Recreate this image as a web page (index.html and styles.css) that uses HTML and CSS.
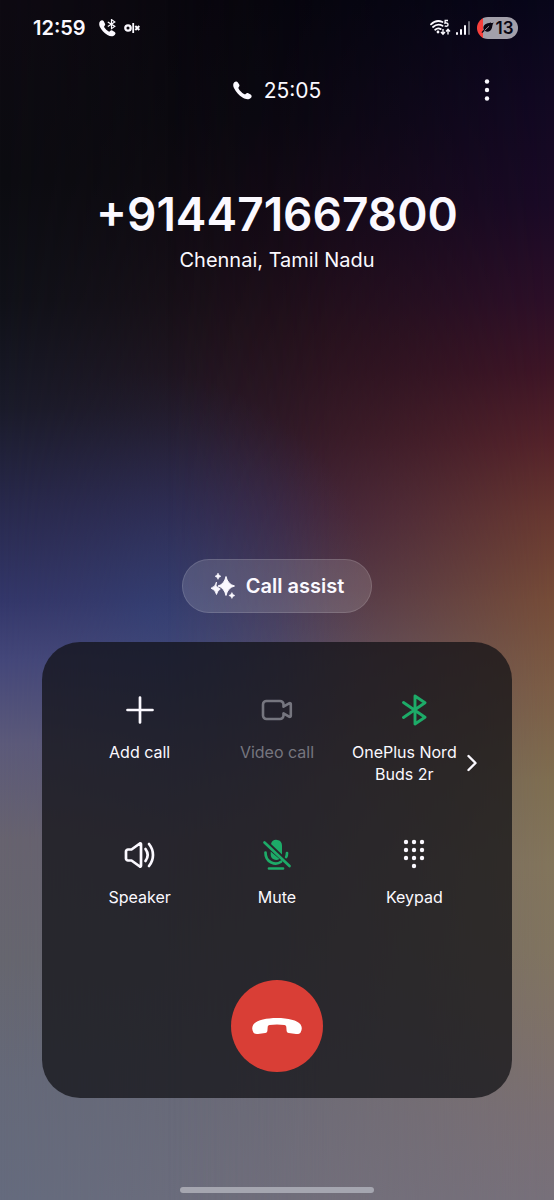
FILE: index.html
```html
<!DOCTYPE html>
<html lang="en">
<head>
<meta charset="utf-8">
<meta name="viewport" content="width=device-width, initial-scale=1">
<title>Ongoing call</title>
<link rel="stylesheet" href="styles.css">
</head>
<body>
<main class="screen">
  <header class="status">
    <div class="status-left">
      <time class="clock">12:59</time>
      <svg class="status-call" width="18" height="18" viewBox="0 0 18 18" aria-hidden="true">
        <path fill="currentColor" d="M1.3 1.9C2.5.8 4 1 4.6 2.1L6 4.7c.5 1 0 1.6-.6 2.4-.5.6-.3 1 .2 1.7 1 1.5 2.2 2.6 3.7 3.5.7.4 1.1.5 1.6-.1.8-.8 1.4-1.2 2.4-.7l2.4 1.4c1.1.7 1.1 2 0 3.1-1.7 1.8-4.4 1.6-7.2-.1C4.900 13.700 2.300 11 .8 7.700-.2 5.400 0 3.200 1.300 1.900z"/>
        <path fill="none" stroke="currentColor" stroke-width="1.200" d="M8.800 3l7 4.400-3.300 2.300V.6l3.300 2.300-7 4.600"/>
      </svg>
      <svg class="status-app" width="17" height="12" viewBox="0 0 17 12" aria-hidden="true" fill="none" stroke="currentColor">
        <circle cx="4" cy="6" r="2.700" stroke-width="2.300"/>
        <path stroke-width="1.800" d="M9.200 1v10"/>
        <path stroke-width="2" d="M11.300 4l4 4M15.300 4l-4 4"/>
      </svg>
    </div>
    <div class="status-right">
      <svg width="21" height="18" viewBox="0 0 21 18" aria-hidden="true" fill="none" stroke="currentColor">
        <path stroke-width="1.800" stroke-linecap="round" d="M1 5.300C4.400 2 9 1.400 12.500 3M3 8c3-2.700 6.400-2.900 9.500-1.200M5.200 10.700c1.800-1.500 3.800-1.600 5.500-.6"/>
        <circle cx="8" cy="13" r="1.400" fill="currentColor" stroke="none"/>
        <path stroke-width="1.400" d="M18 1.500h-2.800L15 4.200c1.600-.5 3 0 3 1.500 0 1.600-1.800 2-3.300 1.200M13 10v5M11 13l2 2.300 2-2.300M18 15.500v-5M16 12.500l2-2.300 2 2.300"/>
      </svg>
      <svg width="14" height="16" viewBox="0 0 14 16" aria-hidden="true" fill="currentColor">
        <rect x="0" y="12" width="2" height="3" rx="1"/><rect x="4" y="9" width="2" height="6" rx="1"/><rect x="8" y="5" width="2" height="10" rx="1"/><rect x="12" y="1" width="2" height="14" rx="1" opacity=".4"/>
      </svg>
      <div class="battery">
        <svg width="13" height="12" viewBox="0 0 13 12" aria-hidden="true"><path fill="#090612" d="M12.800.5c-2 .8-4 .2-6.200.8C3 2.300 1.600 5 2.800 7.500L.5 10.300l.8.8 2.500-2.300c3 2.200 6.200.2 7.100-2.800.5-1.700.5-3.800 1.900-5.500z"/><path fill="none" stroke="#a3a0aa" stroke-width=".9" d="M3.500 8.500l4.600-4.300"/></svg>
        <span>13</span>
      </div>
    </div>
  </header>

  <div class="call-bar">
    <div class="duration">
      <svg width="19" height="19" viewBox="0 0 19 19" aria-hidden="true"><path fill="currentColor" d="M1.300 1.200c1.200-1 2.800-.9 3.600.2l1.300 2.100c.5.9.3 1.600-.4 2.400-.6.700-.5 1.200-.1 1.900 1 1.900 3 4 5.300 5.200.8.400 1.300.3 1.900-.3.700-.8 1.500-1 2.400-.500l2.300 1.300c1.300.8 1.400 2.200.2 3.500-2 2-5.200 1.600-8.300-.4C6 14.300 3 11.200 1.100 7.300-.1 4.800-.2 2.600 1.300 1.200z"/></svg>
      <time>25:05</time>
    </div>
    <button class="more" type="button" aria-label="More options">
      <svg width="6" height="22" viewBox="0 0 6 22" fill="currentColor" aria-hidden="true"><circle cx="3" cy="2.500" r="2.200"/><circle cx="3" cy="11" r="2.200"/><circle cx="3" cy="19.500" r="2.200"/></svg>
    </button>
  </div>

  <section class="caller">
    <h1 class="number">+914471667800</h1>
    <p class="place">Chennai, Tamil Nadu</p>
  </section>

  <button class="assist" type="button">
    <svg width="26" height="26" viewBox="0 0 26 26" aria-hidden="true" fill="currentColor">
      <path d="M16 3.500q1.700 7.800 8.500 9.500-6.800 1.700-8.500 9.500-1.700-7.800-8-9.500 6.300-1.700 8-9.500z" stroke="currentColor" stroke-linejoin="round"/>
      <path d="M6.500 9q-.9 4.800-5.500 6.200 4.300 1.300 5.500 6.300.9-4 3.800-5.500L6 13z" stroke="currentColor" stroke-width=".8" stroke-linejoin="round"/>
      <path d="M8 0q.6 2.700 3 3.300Q8.600 3.900 8 6.400 7.400 3.900 5 3.300 7.400 2.700 8 0z" stroke="currentColor" stroke-width=".5"/>
      <path d="M21.900 19.500q.6 2.300 3 3-2.400.6-3 3-.6-2.400-3-3 2.400-.7 3-3z" stroke="currentColor" stroke-width=".5"/>
    </svg>
    <span>Call assist</span>
  </button>

  <section class="panel" aria-label="Call controls">
    <div class="controls">
      <button class="control" type="button">
        <svg width="32" height="32" viewBox="0 0 32 32" aria-hidden="true" fill="none" stroke="currentColor" stroke-width="2.700" stroke-linecap="round"><path d="M16 3.500v25M3.500 16h25"/></svg>
        <span>Add call</span>
      </button>
      <button class="control" type="button" disabled>
        <svg width="32" height="32" viewBox="0 0 32 32" aria-hidden="true" fill="none" stroke="currentColor" stroke-width="2.600" stroke-linejoin="round"><path d="M5.500 7H19a3.500 3.500 0 0 1 3.500 3.500v2.200L28.500 9.200a1 1 0 0 1 1.300 1v11.600a1 1 0 0 1-1.300 1l-6-3.500v2.200A3.500 3.500 0 0 1 19 25H5.500A3.500 3.500 0 0 1 2 21.500v-11A3.500 3.500 0 0 1 5.500 7z"/></svg>
        <span>Video call</span>
      </button>
      <button class="control" type="button" aria-pressed="true">
        <svg class="green" width="32" height="32" viewBox="0 0 32 32" aria-hidden="true" fill="none" stroke="currentColor" stroke-width="2.900" stroke-linecap="round" stroke-linejoin="round"><path d="M5.500 8.500l21.500 14.800-10 6.700V2l10 6.700L5.500 23.500"/></svg>
        <span class="device">
          <span>OnePlus Nord<br>Buds 2r</span>
          <svg width="10" height="18" viewBox="0 0 10 18" aria-hidden="true" fill="none" stroke="currentColor" stroke-width="2.400" stroke-linecap="round" stroke-linejoin="round"><path d="M1.500 2L8.500 9l-7 7"/></svg>
        </span>
      </button>
      <button class="control" type="button">
        <svg width="32" height="32" viewBox="0 0 32 32" aria-hidden="true" fill="none" stroke="currentColor" stroke-width="2.700" stroke-linecap="round" stroke-linejoin="round"><path d="M4 10.500h3.500l8.300-6a.8.8 0 0 1 1.200.7v21.600a.8.8 0 0 1-1.200.7l-8.300-6H4A2 2 0 0 1 2 19.500v-7a2 2 0 0 1 2-2zM21.500 10c2.700 3.700 2.700 8.300 0 12M25 5c5.300 6.500 5.300 15.500 0 22"/></svg>
        <span>Speaker</span>
      </button>
      <button class="control" type="button" aria-pressed="true">
        <svg class="green" width="32" height="32" viewBox="0 0 32 32" aria-hidden="true" fill="none" stroke="currentColor" stroke-width="2.700" stroke-linecap="round"><path d="M10 5A5.600 5.600 0 0 1 21 6.500v8.900zM9.700 12.500l8.800 7.500c-4 2.300-8.800 0-8.800-4.500z" fill="currentColor" stroke="none"/><path d="M4.500 13.500C4.300 24 15 26.500 20 22.700M26 14c0 1.500-.2 2.800-.8 4M8 29.500h14M3.500 3.500l25 23.500"/></svg>
        <span>Mute</span>
      </button>
      <button class="control" type="button">
        <svg width="32" height="32" viewBox="0 0 32 32" aria-hidden="true" fill="currentColor"><circle cx="8" cy="3" r="2.200"/><circle cx="16" cy="3" r="2.200"/><circle cx="24" cy="3" r="2.200"/><circle cx="8" cy="11" r="2.200"/><circle cx="16" cy="11" r="2.200"/><circle cx="24" cy="11" r="2.200"/><circle cx="8" cy="19" r="2.200"/><circle cx="16" cy="19" r="2.200"/><circle cx="24" cy="19" r="2.200"/><circle cx="16" cy="27" r="2.200"/></svg>
        <span>Keypad</span>
      </button>
    </div>
    <button class="end" type="button" aria-label="End call">
      <svg width="50" height="18" viewBox="0 0 50 18" aria-hidden="true"><path fill="currentColor" d="M25 1c11 0 20.500 2.400 23.600 6.400 1.600 2.300 1.600 5.600 0 8-1 1.400-2.700 1.700-4.600 1.500l-7.200-.9c-1.500-.3-2.100-1-2.200-2.300l-.3-3.600c-.1-1.300-.6-1.900-1.900-2.100-4.500-.7-10.300-.7-14.800 0-1.300.2-1.800.8-1.900 2.100l-.3 3.600c-.1 1.300-.7 2-2.200 2.300l-7.200.9c-1.900.2-3.600-.1-4.600-1.500-1.600-2.400-1.600-5.700 0-8C4.500 3.400 14 1 25 1z"/></svg>
    </button>
  </section>
  <div class="home-bar"></div>
</main>
</body>
</html>
```

FILE: styles.css
```css
* {
  box-sizing: border-box;
}

body {
  margin: 0;
  background: #0a080e;
  color: #fbf9ff;
  font-family: Inter, Roboto, sans-serif;
}

button {
  margin: 0;
  padding: 0;
  border: 0;
  background: none;
  color: inherit;
  font: inherit;
}

svg {
  display: block;
  flex: none;
}

/* Three vertical colour ramps blended from left to right */
.screen {
  position: relative;
  isolation: isolate;
  display: flex;
  flex-direction: column;
  align-items: center;
  min-height: 100vh;
  background:
    linear-gradient(#0e0a12 0%, #0c0c11 15%, #101118 25%, #1a1b2a 34%, #28294c 42%, #33376a 50%, #44477a 55%, #5c5a7a 62%, #67636f 70%, #66666f 80%, #656979 90%, #656b7e 100%);
}

.screen::before,
.screen::after {
  content: "";
  position: absolute;
  inset: 0;
  z-index: -1;
}

.screen::before {
  background:
    radial-gradient(ellipse 42% 20% at 26% 51%, rgba(46, 74, 132, 0.75), rgba(46, 74, 132, 0.4) 45%, transparent),
    linear-gradient(#06050b 0%, #0a080e 10%, #160b14 20%, #22121a 28%, #2c1826 36%, #38203e 43%, #44304f 49%, #534868 55%, #60566e 65%, #66626e 78%, #6a6a78 90%, #706e7b 100%);
  mask-image: linear-gradient(to right, transparent, rgba(0, 0, 0, 0.3) 20%, rgba(0, 0, 0, 0.75) 42%, #000 60%);
}

.screen::after {
  background:
    linear-gradient(#08061a 0%, #110822 8%, #1a0a26 17%, #2c0f28 25%, #3e1526 31%, #55232a 37%, #683830 43%, #764c38 50%, #7c5c44 57%, #7f6e50 65%, #83755b 72%, #81745f 79%, #7e7168 86%, #7a6f73 93%, #77707a 100%);
  mask-image: linear-gradient(to right, transparent 30%, rgba(0, 0, 0, 0.15) 50%, rgba(0, 0, 0, 0.55) 75%, #000);
}

.status {
  display: flex;
  align-items: center;
  justify-content: space-between;
  width: 100%;
  height: 56px;
  padding: 0 36px 0 33px;
}

.status-left,
.status-right {
  display: flex;
  align-items: center;
}

.clock {
  font-size: 20px;
  font-weight: 600;
}

.status-call {
  margin-left: 13px;
}

.status-app {
  margin-left: 7px;
}

.status-right {
  gap: 5px;
}

.battery {
  display: flex;
  align-items: center;
  justify-content: center;
  gap: 1px;
  width: 41px;
  height: 22px;
  margin-left: 2px;
  border-radius: 11px;
  background: linear-gradient(to right, #f8403c 6px, #a3a0aa 6px);
  color: #090612;
  font-size: 17px;
  font-weight: 600;
}

.call-bar {
  display: grid;
  grid-template-columns: 1fr auto 1fr;
  align-items: center;
  width: 100%;
  height: 68px;
  padding: 0 56px;
}

.duration {
  grid-column: 2;
  display: flex;
  align-items: center;
  gap: 12px;
  font-size: 21px;
}

.more {
  justify-self: end;
  padding: 8px;
}

.caller {
  display: flex;
  flex-direction: column;
  align-items: center;
  margin-top: 60px;
}

.number {
  margin: 0;
  font-size: 46px;
  font-weight: 600;
  line-height: 60px;
}

.place {
  margin: 0;
  font-size: 20px;
  line-height: 32px;
}

.assist {
  display: flex;
  align-items: center;
  justify-content: center;
  gap: 10px;
  width: 190px;
  height: 54px;
  margin-top: 283px;
  border: 1px solid rgba(255, 255, 255, 0.13);
  border-radius: 27px;
  background: rgba(255, 255, 255, 0.14);
  font-size: 20px;
  font-weight: 600;
}

.panel {
  display: flex;
  flex-direction: column;
  align-items: center;
  align-self: stretch;
  margin: 29px 42px 0;
  padding: 52px 29px 26px;
  border-radius: 38px;
  background: rgba(16, 17, 20, 0.73);
}

.controls {
  display: grid;
  grid-template-columns: repeat(3, 1fr);
  width: 100%;
}

.control {
  display: flex;
  flex-direction: column;
  align-items: center;
  gap: 15px;
  min-height: 145px;
  font-size: 16px;
  line-height: 22px;
}

.control:disabled {
  color: #76767f;
}

.green {
  color: #1dab68;
}

.device {
  display: flex;
  align-items: center;
  gap: 10px;
  white-space: nowrap;
}

.end {
  display: grid;
  place-items: center;
  width: 92px;
  height: 92px;
  margin-top: -4px;
  border-radius: 50%;
  background: #d93e36;
  color: #fff;
}

.home-bar {
  width: 194px;
  height: 6px;
  margin: auto 0 7px;
  border-radius: 3px;
  background: #a5a6b0;
}
```
